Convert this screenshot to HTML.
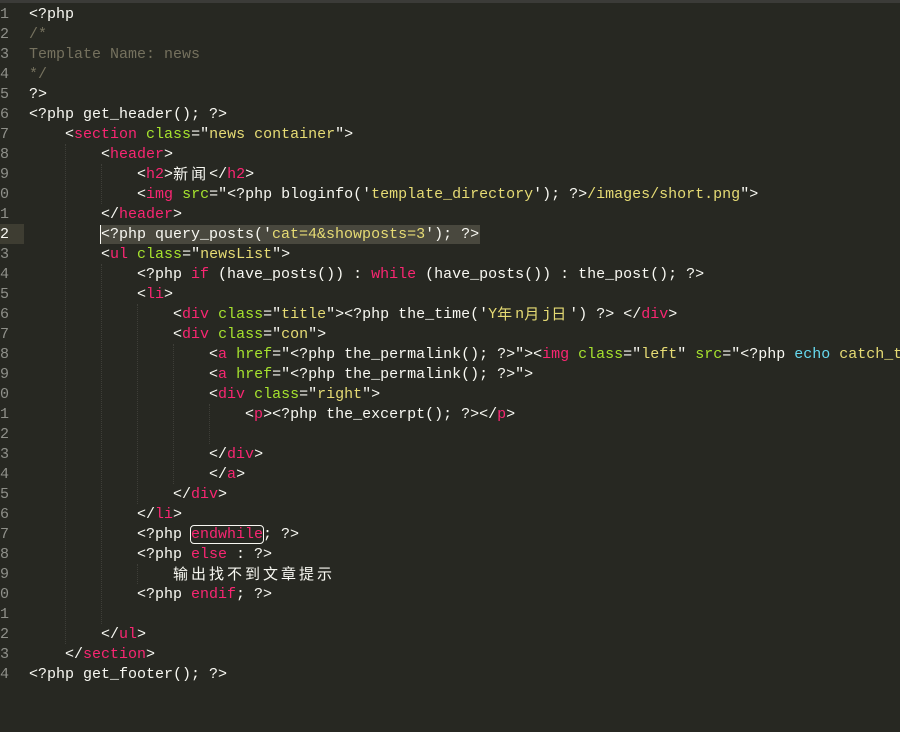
<!DOCTYPE html>
<html><head><meta charset="utf-8"><style>
html,body{margin:0;padding:0;width:900px;height:732px;overflow:hidden;background:#272822;}
.top{position:absolute;left:0;top:0;width:900px;height:3px;background:#3b3b38;}
.ln{position:absolute;left:0;width:24px;height:20px;font:15px/20px "Liberation Mono",monospace;color:#8f908a;margin-top:1px;}
.l{position:absolute;left:29px;height:20px;white-space:pre;font:15px/20px "Liberation Mono",monospace;color:#f8f8f2;margin-top:1px;}
.z{font-family:"Noto Sans CJK SC",sans-serif;letter-spacing:3px;line-height:15px;display:inline-block;vertical-align:top;margin-top:1px;}
.t{color:#f92672}.a{color:#a6e22e}.s{color:#e6db74}.c{color:#75715e}.b{color:#66d9ef}
.g{position:absolute;width:0;border-left:1px dotted #3e3e38;}
</style></head><body>
<div class="top"></div>
<div style="position:absolute;left:0;top:224px;width:24px;height:20px;background:#3e3d32"></div>
<div style="position:absolute;left:100px;top:225px;width:379px;height:19px;background:#49483e;border-left:1px solid #f8f8f2"></div>
<div class="g" style="left:65px;top:144px;height:500px"></div>
<div class="g" style="left:101px;top:164px;height:40px"></div>
<div class="g" style="left:101px;top:264px;height:360px"></div>
<div class="g" style="left:137px;top:304px;height:200px"></div>
<div class="g" style="left:173px;top:344px;height:140px"></div>
<div class="g" style="left:209px;top:404px;height:40px"></div>
<div class="g" style="left:137px;top:564px;height:20px"></div>
<div class="ln" style="top:4px">1</div><div class="ln" style="top:24px">2</div><div class="ln" style="top:44px">3</div><div class="ln" style="top:64px">4</div><div class="ln" style="top:84px">5</div><div class="ln" style="top:104px">6</div><div class="ln" style="top:124px">7</div><div class="ln" style="top:144px">8</div><div class="ln" style="top:164px">9</div><div class="ln" style="top:184px">0</div><div class="ln" style="top:204px">1</div><div class="ln" style="top:224px;color:#f8f8f2">2</div><div class="ln" style="top:244px">3</div><div class="ln" style="top:264px">4</div><div class="ln" style="top:284px">5</div><div class="ln" style="top:304px">6</div><div class="ln" style="top:324px">7</div><div class="ln" style="top:344px">8</div><div class="ln" style="top:364px">9</div><div class="ln" style="top:384px">0</div><div class="ln" style="top:404px">1</div><div class="ln" style="top:424px">2</div><div class="ln" style="top:444px">3</div><div class="ln" style="top:464px">4</div><div class="ln" style="top:484px">5</div><div class="ln" style="top:504px">6</div><div class="ln" style="top:524px">7</div><div class="ln" style="top:544px">8</div><div class="ln" style="top:564px">9</div><div class="ln" style="top:584px">0</div><div class="ln" style="top:604px">1</div><div class="ln" style="top:624px">2</div><div class="ln" style="top:644px">3</div><div class="ln" style="top:664px">4</div>
<div class="l" style="top:4px">&lt;?php</div>
<div class="l c" style="top:24px">/*</div>
<div class="l c" style="top:44px">Template Name: news</div>
<div class="l c" style="top:64px">*/</div>
<div class="l" style="top:84px">?&gt;</div>
<div class="l" style="top:104px">&lt;?php get_header(); ?&gt;</div>
<div class="l" style="top:124px">    &lt;<span class="t">section</span> <span class="a">class</span>="<span class="s">news container</span>"&gt;</div>
<div class="l" style="top:144px">        &lt;<span class="t">header</span>&gt;</div>
<div class="l" style="top:164px">            &lt;<span class="t">h2</span>&gt;<span class="z">新闻</span>&lt;/<span class="t">h2</span>&gt;</div>
<div class="l" style="top:184px">            &lt;<span class="t">img</span> <span class="a">src</span>="&lt;?php bloginfo('<span class="s">template_directory</span>'); ?&gt;<span class="s">/images/short.png</span>"&gt;</div>
<div class="l" style="top:204px">        &lt;/<span class="t">header</span>&gt;</div>
<div class="l" style="top:224px">        &lt;?php query_posts('<span class="s">cat=4&amp;showposts=3</span>'); ?&gt;</div>
<div class="l" style="top:244px">        &lt;<span class="t">ul</span> <span class="a">class</span>="<span class="s">newsList</span>"&gt;</div>
<div class="l" style="top:264px">            &lt;?php <span class="t">if</span> (have_posts()) : <span class="t">while</span> (have_posts()) : the_post(); ?&gt;</div>
<div class="l" style="top:284px">            &lt;<span class="t">li</span>&gt;</div>
<div class="l" style="top:304px">                &lt;<span class="t">div</span> <span class="a">class</span>="<span class="s">title</span>"&gt;&lt;?php the_time('<span class="s">Y<span class="z">年</span>n<span class="z">月</span>j<span class="z">日</span></span>') ?&gt; &lt;/<span class="t">div</span>&gt;</div>
<div class="l" style="top:324px">                &lt;<span class="t">div</span> <span class="a">class</span>="<span class="s">con</span>"&gt;</div>
<div class="l" style="top:344px">                    &lt;<span class="t">a</span> <span class="a">href</span>="&lt;?php the_permalink(); ?&gt;"&gt;&lt;<span class="t">img</span> <span class="a">class</span>="<span class="s">left</span>" <span class="a">src</span>="&lt;?php <span class="b">echo</span> <span class="s">catch_t</span></div>
<div class="l" style="top:364px">                    &lt;<span class="t">a</span> <span class="a">href</span>="&lt;?php the_permalink(); ?&gt;"&gt;</div>
<div class="l" style="top:384px">                    &lt;<span class="t">div</span> <span class="a">class</span>="<span class="s">right</span>"&gt;</div>
<div class="l" style="top:404px">                        &lt;<span class="t">p</span>&gt;&lt;?php the_excerpt(); ?&gt;&lt;/<span class="t">p</span>&gt;</div>
<div class="l" style="top:444px">                    &lt;/<span class="t">div</span>&gt;</div>
<div class="l" style="top:464px">                    &lt;/<span class="t">a</span>&gt;</div>
<div class="l" style="top:484px">                &lt;/<span class="t">div</span>&gt;</div>
<div class="l" style="top:504px">            &lt;/<span class="t">li</span>&gt;</div>
<div class="l" style="top:524px">            &lt;?php <span class="t" style="outline:1px solid #f8f8f2;border-radius:3px">endwhile</span>; ?&gt;</div>
<div class="l" style="top:544px">            &lt;?php <span class="t">else</span> : ?&gt;</div>
<div class="l" style="top:564px">                <span class="z">输出找不到文章提示</span></div>
<div class="l" style="top:584px">            &lt;?php <span class="t">endif</span>; ?&gt;</div>
<div class="l" style="top:624px">        &lt;/<span class="t">ul</span>&gt;</div>
<div class="l" style="top:644px">    &lt;/<span class="t">section</span>&gt;</div>
<div class="l" style="top:664px">&lt;?php get_footer(); ?&gt;</div>
</body></html>
